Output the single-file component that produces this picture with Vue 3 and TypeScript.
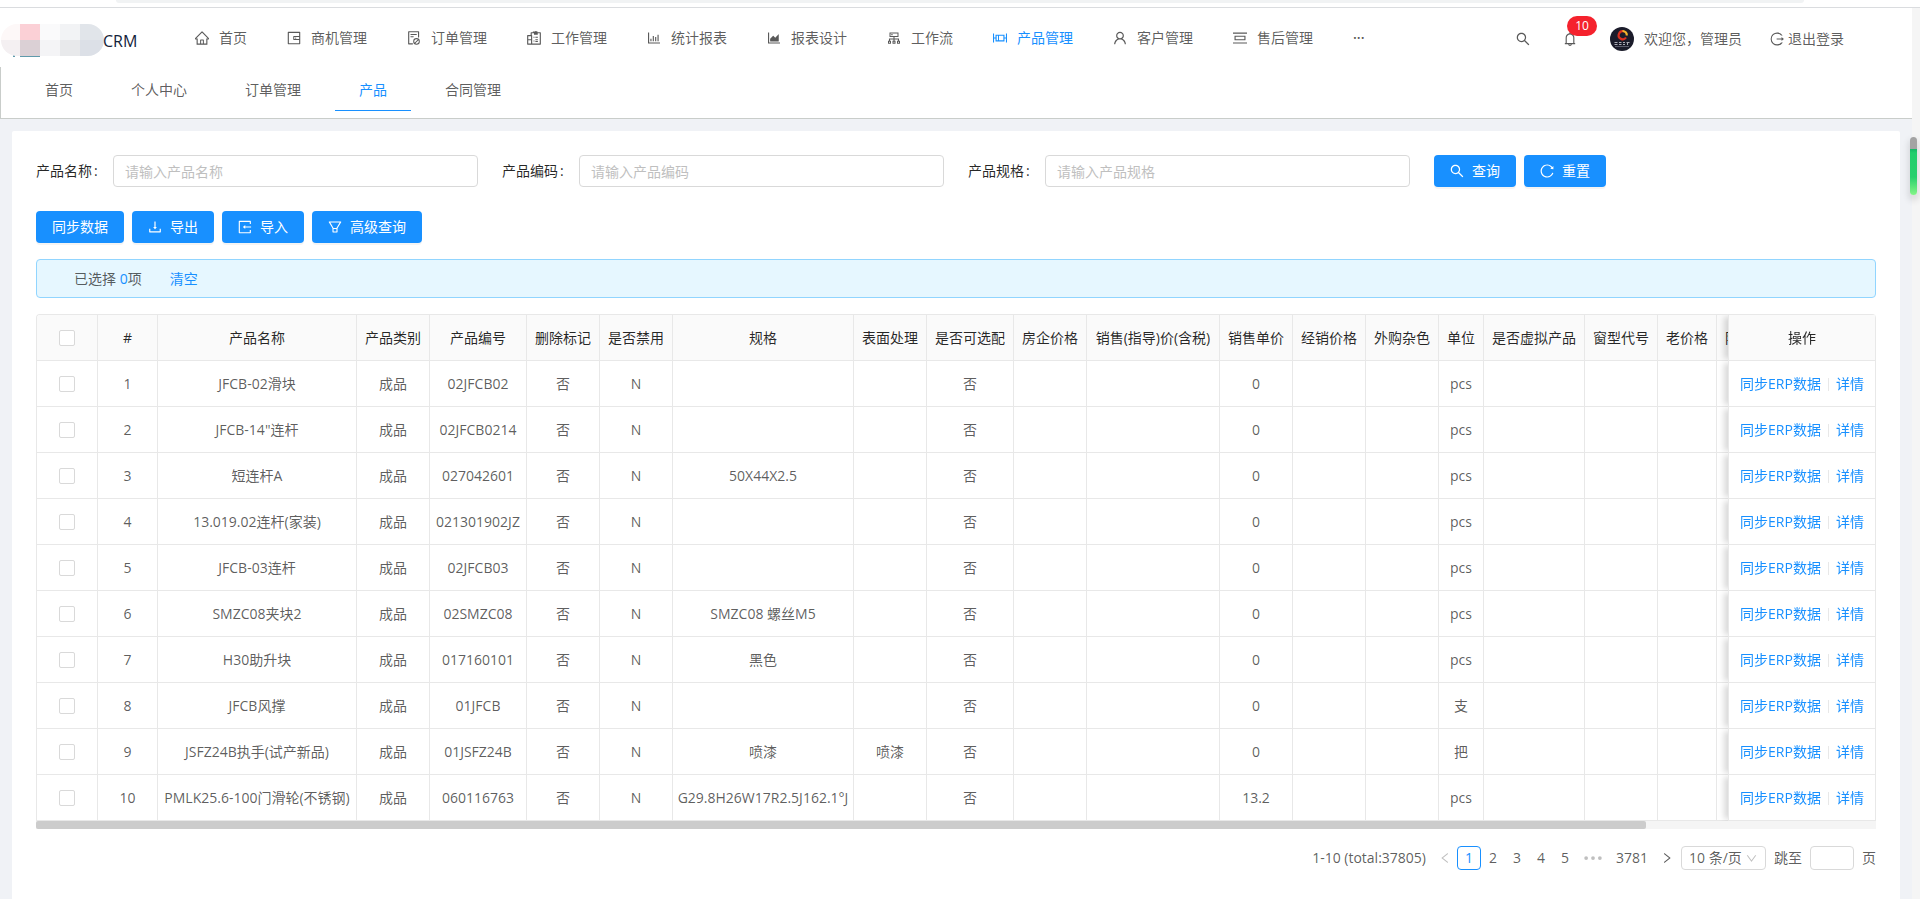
<script setup lang="ts">
import { computed, reactive, ref } from 'vue'

interface MenuItem { label: string; icon: string; active?: boolean }
interface Column { title: string; width: number; key?: keyof Product }
interface Product {
  name: string
  kind: string
  code: string
  removed: string
  disabled: string
  spec: string
  surface: string
  optional: string
  price: string
  unit: string
}

const icons: Record<string, string> = {
  home: 'M946.5 505L560.1 118.8l-25.9-25.9a31.5 31.5 0 0 0-44.4 0L77.5 505a63.9 63.9 0 0 0-18.8 46c.4 35.2 29.7 63.3 64.9 63.3h42.5V940h691.8V614.3h43.4c17.1 0 33.2-6.7 45.3-18.8a63.6 63.6 0 0 0 18.7-45.3c0-17-6.7-33.1-18.8-45.2zM568 868H456V664h112v204zm217.9-325.7V868H632V640c0-22.1-17.9-40-40-40H432c-22.1 0-40 17.9-40 40v228H238.1V542.3h-96l370-369.7 23.1 23.1L882 542.3h-96.1z',
  wallet: 'M880 112H144c-17.7 0-32 14.3-32 32v736c0 17.7 14.3 32 32 32h736c17.7 0 32-14.3 32-32V144c0-17.7-14.3-32-32-32zm-40 464H528V448h312v128zm0 264H184V184h656v200H496c-17.7 0-32 14.3-32 32v192c0 17.7 14.3 32 32 32h344v200zM580 512a40 40 0 1 0 80 0 40 40 0 1 0-80 0z',
  order: 'M296 250c-4.4 0-8 3.6-8 8v48c0 4.4 3.6 8 8 8h384c4.4 0 8-3.6 8-8v-48c0-4.4-3.6-8-8-8H296zm184 144H296c-4.4 0-8 3.6-8 8v48c0 4.4 3.6 8 8 8h184c4.4 0 8-3.6 8-8v-48c0-4.4-3.6-8-8-8zm-48 458H208V148h560v320c0 4.4 3.6 8 8 8h56c4.4 0 8-3.6 8-8V108c0-17.7-14.3-32-32-32H168c-17.7 0-32 14.3-32 32v784c0 17.7 14.3 32 32 32h264c4.4 0 8-3.6 8-8v-56c0-4.4-3.6-8-8-8zM672 516a212 212 0 1 0 0 424a212 212 0 0 0 0-424zm0 68c30 0 58 9 81 25L553 809a144 144 0 0 1 119-225zm0 288a143 143 0 0 1-73-20l200-200a144 144 0 0 1-127 220z',
  work: 'M920 140H740V96h-68V64h-76v32H440v44H328c-18 0-32 14-32 32v148H104c-18 0-32 14-32 32v556c0 18 14 32 32 32h816c18 0 32-14 32-32V172c0-18-14-32-32-32zM324 868H144V660h180v208zm0-276H144V392h180v200zm556 276H396V352c0-18-10-32-28-32v-108h144v92h240v-92h128v656zM480 430h64v68h-64zm120 0h160v68H600zM480 664h64v68h-64zm120-80h160v68H600zm0 120h160v68H600z',
  bar: 'M888 792H200V168c0-4.4-3.6-8-8-8h-56c-4.4 0-8 3.6-8 8v688c0 4.4 3.6 8 8 8h752c4.4 0 8-3.6 8-8v-56c0-4.4-3.6-8-8-8zM280 552h72v160h-72zM432 376h72v336h-72zM584 454h72v258h-72zM736 296h72v416h-72z',
  area: 'M888 792H200V168c0-4.4-3.6-8-8-8h-56c-4.4 0-8 3.6-8 8v688c0 4.4 3.6 8 8 8h752c4.4 0 8-3.6 8-8v-56c0-4.4-3.6-8-8-8zm-616-64h536c4.4 0 8-3.6 8-8V284c0-7.2-8.7-10.7-13.7-5.7L592 488.6l-125.4-124a8 8 0 0 0-11.3 0l-189 189.6a7.9 7.9 0 0 0-2.3 5.6V720c0 4.4 3.6 8 8 8z',
  cluster: 'M888 680h-54V540H546v-92h238c8.8 0 16-7.2 16-16V168c0-8.8-7.2-16-16-16H240c-8.8 0-16 7.2-16 16v264c0 8.8 7.2 16 16 16h238v92H190v140h-54c-4.4 0-8 3.6-8 8v176c0 4.4 3.6 8 8 8h176c4.4 0 8-3.6 8-8V688c0-4.4-3.6-8-8-8h-54v-72h220v72h-54c-4.4 0-8 3.6-8 8v176c0 4.4 3.6 8 8 8h176c4.4 0 8-3.6 8-8V688c0-4.4-3.6-8-8-8h-54v-72h220v72h-54c-4.4 0-8 3.6-8 8v176c0 4.4 3.6 8 8 8h176c4.4 0 8-3.6 8-8V688c0-4.4-3.6-8-8-8zM192 744h64v64h-64zM480 744h64v64h-64zM768 744h64v64h-64zM288 216h448v168H288zM340 260h80v80h-80z',
  product: 'M952 224h-52c-4.4 0-8 3.6-8 8v248h-92V304c0-4.4-3.6-8-8-8H232c-4.4 0-8 3.6-8 8v176h-92V232c0-4.4-3.6-8-8-8H72c-4.4 0-8 3.6-8 8v560c0 4.4 3.6 8 8 8h52c4.4 0 8-3.6 8-8V548h92v172c0 4.4 3.6 8 8 8h560c4.4 0 8-3.6 8-8V548h92v244c0 4.4 3.6 8 8 8h52c4.4 0 8-3.6 8-8V232c0-4.4-3.6-8-8-8zM296 368h88v288h-88V368zm432 288H448V368h280v288z',
  user: 'M858.5 763.6a374 374 0 0 0-80.6-119.5 375.63 375.63 0 0 0-119.5-80.6c-.4-.2-.8-.3-1.2-.5C719.5 518 760 444.7 760 362c0-137-111-248-248-248S264 225 264 362c0 82.7 40.5 156 102.8 201.1-.4.2-.8.3-1.2.5-44.8 18.9-85 46-119.5 80.6a375.63 375.63 0 0 0-80.6 119.5A371.7 371.7 0 0 0 136 901.8a8 8 0 0 0 8 8.2h60c4.4 0 7.9-3.5 8-7.8 2-77.2 33-149.5 87.8-204.3 56.7-56.7 132-87.9 212.2-87.9s155.5 31.2 212.2 87.9C779 752.7 810 825 812 902.2c.1 4.4 3.6 7.8 8 7.8h60a8 8 0 0 0 8-8.2c-1-47.8-10.9-94.3-29.5-138.2zM512 534c-45.9 0-89.1-17.9-121.6-50.4S340 407.9 340 362c0-45.9 17.9-89.1 50.4-121.6S466.1 190 512 190s89.1 17.9 121.6 50.4S684 316.1 684 362c0 45.9-17.9 89.1-50.4 121.6S557.9 534 512 534z',
  service: 'M64 160h896v72H64zM64 792h896v72H64zM848 660c8.8 0 16-7.2 16-16V380c0-8.8-7.2-16-16-16H176c-8.8 0-16 7.2-16 16v264c0 8.8 7.2 16 16 16h672zM232 436h560v152H232V436z',
  search: 'M909.6 854.5L649.9 594.8C690.2 542.7 712 479 712 412c0-80.2-31.3-155.4-87.9-212.1-56.6-56.7-132-87.9-212.1-87.9s-155.5 31.3-212.1 87.9C143.2 256.5 112 331.8 112 412c0 80.1 31.3 155.5 87.9 212.1C256.5 680.8 331.8 712 412 712c67 0 130.6-21.8 182.7-62l259.7 259.6a8.2 8.2 0 0 0 11.6 0l43.6-43.5a8.2 8.2 0 0 0 0-11.6zM570.4 570.4C528 612.7 471.8 636 412 636s-116-23.3-158.4-65.6C211.3 528 188 471.8 188 412s23.3-116.1 65.6-158.4C296 211.3 352.2 188 412 188s116.1 23.2 158.4 65.6S636 352.2 636 412s-23.3 116.1-65.6 158.4z',
  bell: 'M816 768h-24V428c0-141.1-104.3-257.7-240-277.1V112c0-22.1-17.9-40-40-40s-40 17.9-40 40v38.9c-135.7 19.4-240 136-240 277.1v340h-24c-17.7 0-32 14.3-32 32v32c0 4.4 3.6 8 8 8h216c0 61.8 50.2 112 112 112s112-50.2 112-112h216c4.4 0 8-3.6 8-8v-32c0-17.7-14.3-32-32-32zM512 888c-26.5 0-48-21.5-48-48h96c0 26.5-21.5 48-48 48zM304 768V428c0-55.6 21.6-107.8 60.9-147.1S456.4 220 512 220c55.6 0 107.8 21.6 147.1 60.9S720 372.4 720 428v340H304z',
  logout: 'M868 732h-92a342 342 0 1 1 0-440h92a8 8 0 0 0 6-12A420 420 0 1 0 875 744a8 8 0 0 0-7-12zM956 505L815 393c-5-4-13 0-13 7v76H488v72h314v76c0 7 8 11 13 7l141-112a9 9 0 0 0 0-14z',
  reload: 'M909.1 209.3l-56.4 44.1C775.8 155.1 656.2 92 521.9 92 290 92 102.3 279.5 102 511.5 101.7 743.7 289.8 932 521.9 932c181.3 0 335.8-115 394.6-276.1 1.5-4.2-.7-8.9-4.9-10.3l-56.7-19.5a8 8 0 0 0-10.1 4.8c-1.8 5-3.8 10-5.9 14.9-17.3 41-42.1 77.8-73.7 109.4A344.77 344.77 0 0 1 655.9 829c-42.3 17.9-87.4 27-133.8 27-46.5 0-91.5-9.1-133.8-27A341.5 341.5 0 0 1 279 755.2a342.16 342.16 0 0 1-73.7-109.4c-17.9-42.4-27-87.4-27-133.9s9.1-91.5 27-133.9c17.3-41 42.1-77.8 73.7-109.4 31.6-31.6 68.4-56.4 109.3-73.8 42.3-17.9 87.4-27 133.8-27 46.5 0 91.5 9.1 133.8 27a341.5 341.5 0 0 1 109.3 73.8c9.9 9.9 19.2 20.4 27.8 31.4l-60.2 47a8 8 0 0 0 3 14.1l175.6 43c5 1.2 9.9-2.6 9.9-7.7l.8-180.9c-.1-6.6-7.8-10.3-13-6.2z',
  download: 'M505.7 661a8 8 0 0 0 12.6 0l112-141.7c4.1-5.2.4-12.9-6.3-12.9h-74.1V168c0-4.4-3.6-8-8-8h-60c-4.4 0-8 3.6-8 8v338.3H400c-6.7 0-10.4 7.7-6.3 12.9l112 141.8zM878 626h-60c-4.4 0-8 3.6-8 8v154H214V634c0-4.4-3.6-8-8-8h-60c-4.4 0-8 3.6-8 8v198c0 17.7 14.3 32 32 32h684c17.7 0 32-14.3 32-32V634c0-4.4-3.6-8-8-8z',
  importIn: 'M888 326V144c0-18-14-32-32-32H144c-18 0-32 14-32 32v736c0 18 14 32 32 32h712c18 0 32-14 32-32V698h-72v142H184V184h632v142zM372 518l142 112c5 4 13 0 13-6v-76h375v-72H527v-76c0-7-8-11-13-7L372 505a8 8 0 0 0 0 13z',
  filter: 'M880.1 154H143.9c-24.5 0-39.8 26.7-27.5 48L349 597.4V838c0 17.7 14.2 32 31.8 32h262.4c17.6 0 31.8-14.3 31.8-32V597.4L907.7 202c12.2-21.3-3.1-48-27.6-48zM603.4 798H420.6V642h182.9v156zm9.6-236.6l-9.5 16.6h-183l-9.5-16.6L212.7 226h598.6L613 561.4z',
  left: 'M724 218V141a8 8 0 0 0-13-6L260 486a33 33 0 0 0 0 52l451 351c5 4 13 0 13-6v-77c0-5-2-10-6-13L358 512l360-281c4-3 6-8 6-13z',
  right: 'M300 218V141a8 8 0 0 1 13-6l451 351a33 33 0 0 1 0 52L313 889c-5 4-13 0-13-6v-77c0-5 2-10 6-13l360-281-360-281c-4-3-6-8-6-13z',
  down: 'M884 256h-75c-5 0-10 3-13 7L512 654 228 263c-3-4-8-7-13-7h-75a8 8 0 0 0-6 13l352 486c13 18 39 18 52 0l352-486a8 8 0 0 0-6-13z',
  dots: 'M120 512a84 84 0 1 0 168 0a84 84 0 1 0-168 0zM428 512a84 84 0 1 0 168 0a84 84 0 1 0-168 0zM736 512a84 84 0 1 0 168 0a84 84 0 1 0-168 0z',
}

const menu: MenuItem[] = [
  { label: '首页', icon: 'home' },
  { label: '商机管理', icon: 'wallet' },
  { label: '订单管理', icon: 'order' },
  { label: '工作管理', icon: 'work' },
  { label: '统计报表', icon: 'bar' },
  { label: '报表设计', icon: 'area' },
  { label: '工作流', icon: 'cluster' },
  { label: '产品管理', icon: 'product', active: true },
  { label: '客户管理', icon: 'user' },
  { label: '售后管理', icon: 'service' },
]

const tabs = ['首页', '个人中心', '订单管理', '产品', '合同管理']
const activeTab = ref('产品')

const filters = [
  { id: 'f-name', label: '产品名称', hint: '请输入产品名称' },
  { id: 'f-code', label: '产品编码', hint: '请输入产品编码' },
  { id: 'f-spec', label: '产品规格', hint: '请输入产品规格' },
]
const query = reactive<Record<string, string>>({ 'f-name': '', 'f-code': '', 'f-spec': '' })
function reset() {
  for (const f of filters) query[f.id] = ''
}

const columns: Column[] = [
  { title: '产品名称', width: 199, key: 'name' },
  { title: '产品类别', width: 73, key: 'kind' },
  { title: '产品编号', width: 97, key: 'code' },
  { title: '删除标记', width: 73, key: 'removed' },
  { title: '是否禁用', width: 73, key: 'disabled' },
  { title: '规格', width: 181, key: 'spec' },
  { title: '表面处理', width: 73, key: 'surface' },
  { title: '是否可选配', width: 87, key: 'optional' },
  { title: '房企价格', width: 73 },
  { title: '销售(指导)价(含税)', width: 133 },
  { title: '销售单价', width: 73, key: 'price' },
  { title: '经销价格', width: 73 },
  { title: '外购杂色', width: 73 },
  { title: '单位', width: 45, key: 'unit' },
  { title: '是否虚拟产品', width: 101 },
  { title: '窗型代号', width: 73 },
  { title: '老价格', width: 59 },
  { title: '阶段价格', width: 73 },
  { title: '', width: 203 },
]

function product(name: string, code: string, spec = '', surface = '', unit = 'pcs', price = '0'): Product {
  return { name, kind: '成品', code, removed: '否', disabled: 'N', spec, surface, optional: '否', price, unit }
}
const rows: Product[] = [
  product('JFCB-02滑块', '02JFCB02'),
  product('JFCB-14"连杆', '02JFCB0214'),
  product('短连杆A', '027042601', '50X44X2.5'),
  product('13.019.02连杆(家装)', '021301902JZ'),
  product('JFCB-03连杆', '02JFCB03'),
  product('SMZC08夹块2', '02SMZC08', 'SMZC08 螺丝M5'),
  product('H30助升块', '017160101', '黑色'),
  product('JFCB风撑', '01JFCB', '', '', '支'),
  product('JSFZ24B执手(试产新品)', '01JSFZ24B', '喷漆', '喷漆', '把'),
  product('PMLK25.6-100门滑轮(不锈钢)', '060116763', 'G29.8H26W17R2.5J162.1°J', '', 'pcs', '13.2'),
]

const selected = ref<number[]>([])
const allChecked = computed({
  get: () => selected.value.length === rows.length,
  set: (v: boolean) => { selected.value = v ? rows.map((_, i) => i) : [] },
})
const pages = [1, 2, 3, 4, 5]
const page = ref(1)
const jump = ref('')
</script>

<template>
  <div class="page">
    <div class="browser-edge"><div class="address"></div></div>
    <div class="body">
      <div class="content">
        <header class="top">
          <div class="logo">
            <svg class="mosaic" viewBox="0 0 105 34" aria-hidden="true">
              <clipPath id="pill"><rect x="1" y="0" width="103" height="32" rx="16" /></clipPath>
              <path d="M13 31h2v2h-2zM20 31h20v2H20z" fill="#5f9aab" />
              <g clip-path="url(#pill)" shape-rendering="crispEdges">
                <path d="M0 0h20v16H0z" fill="#fdf8f8" />
                <path d="M20 0h20v16H20z" fill="#fbd0d6" />
                <path d="M40 0h20v16H40z" fill="#fafafb" />
                <path d="M60 0h20v16H60z" fill="#f2f3f5" />
                <path d="M80 0h25v16H80z" fill="#e1e5ea" />
                <path d="M0 16h20v16H0z" fill="#f4f0f2" />
                <path d="M20 16h20v16H20z" fill="#dbd0d5" />
                <path d="M40 16h20v16H40z" fill="#f4f4f6" />
                <path d="M60 16h20v16H60z" fill="#e8e9eb" />
                <path d="M80 16h25v16H80z" fill="#dce0e7" />
              </g>
            </svg>
            <span class="brand">CRM</span>
          </div>
          <nav class="menu">
            <a v-for="m in menu" :key="m.label" href="#" :class="{ active: m.active }">
              <svg class="icon" viewBox="64 64 896 896"><path fill-rule="evenodd" :d="icons[m.icon]" /></svg>{{ m.label }}
            </a>
            <a href="#" class="more">···</a>
          </nav>
          <div class="tools">
            <button type="button" class="plain" aria-label="搜索">
              <svg class="icon" viewBox="64 64 896 896"><path :d="icons.search" /></svg>
            </button>
            <button type="button" class="plain bell" aria-label="通知">
              <svg class="icon" viewBox="64 64 896 896"><path :d="icons.bell" /></svg>
              <span class="badge">10</span>
            </button>
            <svg class="avatar" viewBox="0 0 24 24" aria-hidden="true">
              <circle cx="12" cy="12" r="12" fill="#1b1c2b" />
              <path d="M14 4.500A4 4 0 1 0 16 10.500" fill="none" stroke="#d9301f" stroke-width="2.200" />
              <path d="M12.500 4A4.200 4.200 0 0 1 16.800 8.500" fill="none" stroke="#f4b62b" stroke-width="2.200" />
              <path d="M4.500 15.500h3M4.500 17.500h3M9 15.500h2.500M9 17.500h2.500M13 15.500h2M13 17.500h2M16.500 15.500h3M17.500 15.500v2.500" stroke="#a9aab4" />
              <path d="M5 19.500h14" stroke="#777988" stroke-width=".7" />
            </svg>
            <span class="welcome">欢迎您，管理员</span>
            <a href="#" class="logout">
              <svg class="icon" viewBox="64 64 896 896"><path :d="icons.logout" /></svg>退出登录
            </a>
          </div>
        </header>

        <nav class="tabs">
          <button v-for="t in tabs" :key="t" type="button" :class="{ on: t === activeTab }" @click="activeTab = t">{{ t }}</button>
        </nav>

        <main class="card">
          <form class="filters" @submit.prevent>
            <div v-for="f in filters" :key="f.id" class="field">
              <label :for="f.id">{{ f.label }}<span>:</span></label>
              <input :id="f.id" v-model="query[f.id]" type="text" :placeholder="f.hint" />
            </div>
            <div class="buttons">
              <button type="submit" class="btn"><svg class="icon" viewBox="64 64 896 896"><path :d="icons.search" /></svg>查询</button>
              <button type="button" class="btn" @click="reset"><svg class="icon" viewBox="64 64 896 896"><path :d="icons.reload" /></svg>重置</button>
            </div>
          </form>

          <div class="buttons actions">
            <button type="button" class="btn">同步数据</button>
            <button type="button" class="btn"><svg class="icon" viewBox="64 64 896 896"><path :d="icons.download" /></svg>导出</button>
            <button type="button" class="btn"><svg class="icon" viewBox="64 64 896 896"><path :d="icons.importIn" /></svg>导入</button>
            <button type="button" class="btn"><svg class="icon" viewBox="64 64 896 896"><path :d="icons.filter" /></svg>高级查询</button>
          </div>

          <div class="notice">
            <span>已选择 <b>{{ selected.length }}</b>项</span>
            <a href="#" @click.prevent="selected = []">清空</a>
          </div>

          <div class="table-box">
            <table>
              <colgroup>
                <col class="c-check" />
                <col class="c-index" />
                <col v-for="(c, i) in columns" :key="i" :style="{ width: c.width + 'px' }" />
                <col class="c-op" />
              </colgroup>
              <thead>
                <tr>
                  <th><input v-model="allChecked" type="checkbox" aria-label="全选" /></th>
                  <th>#</th>
                  <th v-for="(c, i) in columns" :key="i">{{ c.title }}</th>
                  <th class="op">操作</th>
                </tr>
              </thead>
              <tbody>
                <tr v-for="(r, i) in rows" :key="r.code">
                  <td><input v-model="selected" type="checkbox" :value="i" :aria-label="'选择 ' + r.name" /></td>
                  <td>{{ i + 1 }}</td>
                  <td v-for="(c, j) in columns" :key="j">{{ c.key ? r[c.key] : '' }}</td>
                  <td class="op"><a href="#">同步ERP数据</a><i></i><a href="#">详情</a></td>
                </tr>
              </tbody>
            </table>
          </div>
          <div class="track"><div class="thumb"></div></div>

          <div class="pager">
            <span class="total">1-10 (total:37805)</span>
            <button type="button" class="arrow" aria-label="上一页" disabled><svg viewBox="64 64 896 896"><path :d="icons.left" /></svg></button>
            <button v-for="p in pages" :key="p" type="button" class="num" :class="{ on: p === page }" @click="page = p">{{ p }}</button>
            <svg class="dots" viewBox="64 64 896 896" aria-hidden="true"><path :d="icons.dots" /></svg>
            <button type="button" class="num last">3781</button>
            <button type="button" class="arrow" aria-label="下一页"><svg viewBox="64 64 896 896"><path :d="icons.right" /></svg></button>
            <span class="size">
              <select aria-label="每页条数"><option>10 条/页</option><option>20 条/页</option><option>30 条/页</option></select>
              <svg viewBox="64 64 896 896"><path :d="icons.down" /></svg>
            </span>
            <label for="jump">跳至</label>
            <input id="jump" v-model="jump" type="text" />
            <span>页</span>
          </div>
        </main>
      </div>
      <div class="page-scroll"><div class="page-thumb"></div></div>
    </div>
  </div>
</template>

<style>
body { background: #f0f2f6; }
</style>

<style scoped>
* { box-sizing: border-box; }
.page {
  display: flex;
  flex-direction: column;
  min-height: 100vh;
  color: rgba(0, 0, 0, 0.65);
  font: 14px/22px "Open Sans", "Noto Sans CJK SC", sans-serif;
}
a { color: inherit; text-decoration: none; }
button, input, select { font: inherit; color: inherit; margin: 0; }
button { cursor: pointer; }
svg { fill: currentColor; }
.icon { width: 14px; height: 14px; flex: none; }

.browser-edge { height: 8px; background: #fff; border-bottom: 1px solid #dadcdf; }
.address { height: 3px; margin: 0 116px; background: #f1f3f4; border-radius: 0 0 8px 8px; }
.body { display: flex; flex: 1; }
.content { flex: 1; min-width: 0; display: flex; flex-direction: column; }

.top { display: flex; align-items: center; height: 59px; background: #fff; }
.logo { display: flex; align-items: center; width: 175px; padding-top: 6px; }
.mosaic { width: 105px; height: 34px; flex: none; }
.brand { margin-left: -2px; font-size: 16px; line-height: 20px; color: #13223a; }
.menu { display: flex; flex: 1; }
.menu a { display: flex; align-items: center; gap: 10px; padding: 0 20px; white-space: nowrap; }
.menu .active { color: #1890ff; }
.menu .more { font-weight: 600; }
.tools { display: flex; align-items: center; padding: 2px 68px 0 0; white-space: nowrap; }
.plain { display: flex; padding: 0; border: 0; background: none; }
.bell { position: relative; margin: 0 33px; }
.badge {
  position: absolute;
  left: 4px;
  top: -16px;
  width: 30px;
  height: 20px;
  border-radius: 10px;
  background: #f5222d;
  color: #fff;
  font-size: 12px;
  line-height: 20px;
}
.avatar { width: 24px; height: 24px; }
.welcome { margin: 0 28px 0 10px; }
.logout { display: flex; align-items: center; gap: 4px; }

.tabs {
  display: flex;
  gap: 10px;
  height: 52px;
  padding: 0 20px 7px;
  background: #fff;
  border: solid #c9cdca;
  border-width: 0 0 1px 1px;
}
.tabs button { padding: 3px 24px 0; border: 0; border-bottom: 1px solid transparent; background: none; }
.tabs .on { color: #1890ff; border-bottom-color: #1890ff; }

.card { flex: 1; margin: 12px 12px 0; padding: 24px; background: #fff; border-radius: 2px 2px 0 0; }
.filters { display: grid; grid-template-columns: repeat(4, 1fr); gap: 24px; }
.field { display: flex; align-items: center; min-width: 0; }
.field label { width: 77px; flex: none; color: rgba(0, 0, 0, 0.85); }
.field label span { margin-left: 2px; }
.field input, .pager input {
  min-width: 0;
  border: 1px solid #d9d9d9;
  border-radius: 4px;
  background: #fff;
}
.field input { flex: 1; height: 32px; padding: 4px 11px; }
.field input::placeholder { color: #bfbfbf; }
.buttons { display: flex; gap: 8px; }
.actions { margin: 24px 0 16px; }
.btn {
  display: flex;
  align-items: center;
  gap: 8px;
  height: 32px;
  padding: 0 16px;
  border: 0;
  border-radius: 4px;
  background: #1890ff;
  color: #fff;
  white-space: nowrap;
  box-shadow: 0 2px 0 rgba(0, 0, 0, 0.045);
}
.notice {
  display: flex;
  gap: 28px;
  padding: 8px 37px 7px;
  border: 1px solid #91d5ff;
  border-radius: 4px;
  background: #e6f7ff;
}
.notice b { font-weight: 500; }
.notice b, .notice a { color: #1890ff; }

.table-box {
  margin-top: 16px;
  overflow-x: auto;
  scrollbar-width: none;
  border: solid #e8e8e8;
  border-width: 1px 0 0 1px;
  border-radius: 4px 4px 0 0;
}
table { width: 2104px; table-layout: fixed; border-collapse: separate; border-spacing: 0; }
.c-check { width: 61px; }
.c-index { width: 60px; }
.c-op { width: 148px; }
th, td {
  height: 46px;
  padding: 0;
  border: solid #e8e8e8;
  border-width: 0 1px 1px 0;
  text-align: center;
  white-space: nowrap;
}
th { background: #fafafa; color: rgba(0, 0, 0, 0.85); font-weight: 400; }
.op {
  position: sticky;
  right: 0;
  background: #fff;
  border-left: 1px solid #e8e8e8;
  box-shadow: -6px 0 6px -2px rgba(0, 0, 0, 0.15);
  clip-path: inset(0 0 0 -12px);
}
th.op { background: #fafafa; }
.op a { color: #1890ff; }
.op i { display: inline-block; width: 1px; height: 13px; margin: 0 7px; background: #e8e8e8; vertical-align: middle; }
input[type="checkbox"] {
  appearance: none;
  display: block;
  width: 16px;
  height: 16px;
  margin: 0 auto;
  border: 1px solid #d9d9d9;
  border-radius: 2px;
  background: #fff;
}
input[type="checkbox"]:checked { background: #1890ff; border-color: #1890ff; }
.track { height: 8px; background: #f5f5f5; }
.thumb { width: 87.5%; height: 8px; border-radius: 2px; background: #ccc; }

.pager { display: flex; align-items: center; justify-content: flex-end; height: 24px; margin-top: 17px; }
.total { margin-right: 7px; }
.arrow { display: flex; align-items: center; justify-content: center; width: 24px; height: 24px; padding: 0; border: 0; background: none; }
.arrow svg { width: 12px; height: 12px; }
.arrow:disabled { color: #bfbfbf; }
.num { width: 24px; height: 24px; padding: 0; border: 1px solid transparent; border-radius: 4px; background: none; line-height: 20px; }
.num.on { border-color: #1890ff; color: #1890ff; }
.last { width: 46px; }
.dots { width: 20px; height: 20px; margin: 0 6px; color: #bfbfbf; }
.size { position: relative; display: flex; margin: 0 8px 0 2px; }
.size select { appearance: none; width: 85px; height: 24px; padding: 0 7px; border: 1px solid #d9d9d9; border-radius: 4px; background: #fff; line-height: 22px; }
.size svg { position: absolute; right: 9px; top: 7px; width: 11px; height: 11px; color: #bfbfbf; pointer-events: none; }
.pager input { width: 44px; height: 24px; margin: 0 8px; padding: 0 7px; }

.page-scroll { width: 8px; padding-top: 129px; background: #f5f5f5; }
.page-thumb {
  position: relative;
  left: -2px;
  width: 7px;
  height: 58px;
  border-radius: 4px;
  background: linear-gradient(#a3a3a3 12px, #13b765 12px, #21ce6c 16px, #27d06d 40px, #84f587);
  box-shadow: 0 4px 6px 2px rgba(0, 0, 0, 0.1);
}
</style>
